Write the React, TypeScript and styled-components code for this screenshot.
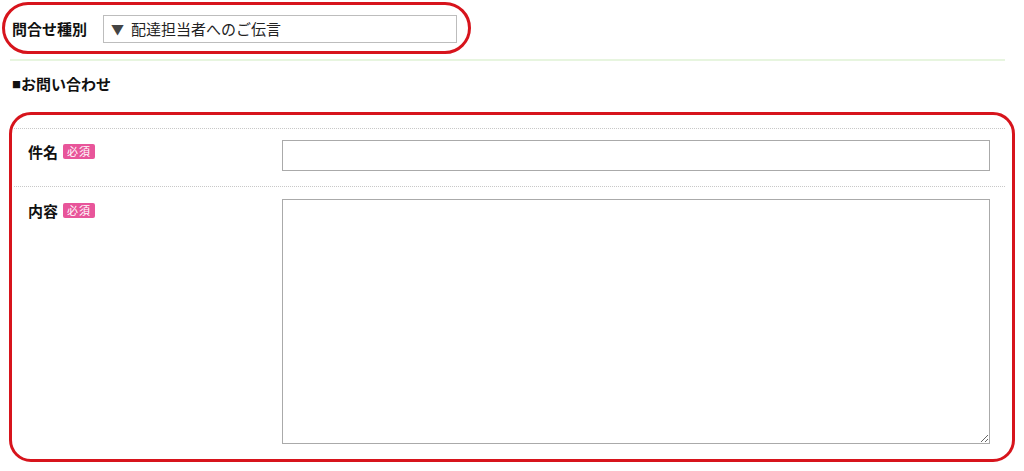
import React from "react";
import styled, { createGlobalStyle } from "styled-components";

const GlobalStyle = createGlobalStyle`
  html, body {
    margin: 0;
    padding: 0;
    background: #fff;
  }
  body {
    font-family: "Noto Sans CJK JP", "Noto Sans", sans-serif;
    color: #111;
  }
`;

const Page = styled.div`
  width: 1024px;
  height: 471px;
  padding-top: 2px;
  box-sizing: border-box;
`;

const HeaderBox = styled.div`
  margin-left: 2px;
  width: 469px;
  height: 52px;
  box-sizing: border-box;
  border: 3px solid #d7141c;
  border-radius: 26px;
  display: flex;
  align-items: center;
  padding-left: 7px;
  gap: 16px;
`;

const HeaderLabel = styled.span`
  font-size: 15px;
  font-weight: bold;
`;

const FakeSelect = styled.div`
  width: 354px;
  height: 28px;
  box-sizing: border-box;
  border: 1px solid #bdbdbd;
  display: flex;
  align-items: center;
  padding-left: 7px;
  font-size: 15px;
  color: #222;
  margin-top: 1px;
`;

const Arrow = styled.span`
  color: #444;
  font-size: 13px;
  margin-right: 7px;
`;

const Divider = styled.div`
  margin: 5px 19px 0 10px;
  height: 2px;
  background: #e7f5df;
`;

const SectionTitle = styled.h2`
  margin: 13px 0 0 12px;
  font-size: 15px;
  font-weight: bold;
  line-height: 20px;
`;

const Square = styled.span`
  font-size: 9px;
  vertical-align: 2px;
`;

const FormBox = styled.div`
  margin: 17px 0 0 9px;
  width: 1006px;
  height: 350px;
  box-sizing: border-box;
  border: 3px solid #d7141c;
  border-radius: 22px;
  padding: 13px 7px 0 2px;
`;

const Row = styled.div<{ $top: number; $bottom: number }>`
  display: flex;
  border-top: 1px dotted #c8c8c8;
  padding: ${(p) => p.$top}px 0 ${(p) => p.$bottom}px 14px;
`;

const Label = styled.div`
  width: 254px;
  display: flex;
  align-items: center;
  height: 20px;
  margin-top: 1px;
  font-size: 15px;
  font-weight: bold;
`;

const Badge = styled.span`
  margin-left: 5px;
  background: #e8559a;
  color: #fff;
  font-size: 11px;
  font-weight: normal;
  line-height: 15px;
  height: 15px;
  padding: 0 4px;
  border-radius: 2px;
  letter-spacing: 1px;
`;

const TextInput = styled.input`
  width: 708px;
  height: 31px;
  box-sizing: border-box;
  border: 1px solid #aaa;
  margin: 0;
  padding: 0 6px;
  font-size: 14px;
`;

const TextArea = styled.textarea`
  width: 708px;
  height: 245px;
  box-sizing: border-box;
  border: 1px solid #aaa;
  margin: 0;
  padding: 4px 6px;
  font-size: 14px;
  display: block;
`;

export default function App() {
  return (
    <>
      <GlobalStyle />
      <Page>
        <HeaderBox>
          <HeaderLabel>問合せ種別</HeaderLabel>
          <FakeSelect>
            <Arrow>▼</Arrow>配達担当者へのご伝言
          </FakeSelect>
        </HeaderBox>
        <Divider />
        <SectionTitle>
          <Square>■</Square>お問い合わせ
        </SectionTitle>
        <FormBox>
          <Row $top={11} $bottom={15}>
            <Label>
              件名<Badge>必須</Badge>
            </Label>
            <TextInput type="text" />
          </Row>
          <Row $top={12} $bottom={0}>
            <Label>
              内容<Badge>必須</Badge>
            </Label>
            <TextArea />
          </Row>
        </FormBox>
      </Page>
    </>
  );
}
